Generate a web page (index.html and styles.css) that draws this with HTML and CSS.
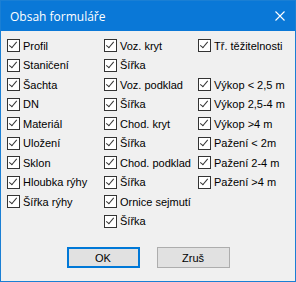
FILE: index.html
```html
<!DOCTYPE html>
<html lang="cs">
<head>
    <meta charset="UTF-8">
    <title>Obsah formuláře</title>
    <link rel="stylesheet" href="styles.css">
</head>
<body>
    <div class="dialog">
        <div class="titlebar">
            <span class="title">Obsah formuláře</span>
            <svg class="close" width="10" height="10" viewBox="0 0 10 10">
                <path d="M0.5 0.5 L9.5 9.5 M9.5 0.5 L0.5 9.5" stroke="#fff" stroke-width="1.1" fill="none"/>
            </svg>
        </div>
        <div class="content">
            <div class="columns">
                <div class="col col1">
                    <label class="check"><span class="box"></span>Profil</label>
                    <label class="check"><span class="box"></span>Staničení</label>
                    <label class="check"><span class="box"></span>Šachta</label>
                    <label class="check"><span class="box"></span>DN</label>
                    <label class="check"><span class="box"></span>Materiál</label>
                    <label class="check"><span class="box"></span>Uložení</label>
                    <label class="check"><span class="box"></span>Sklon</label>
                    <label class="check"><span class="box"></span>Hloubka rýhy</label>
                    <label class="check"><span class="box"></span>Šířka rýhy</label>
                </div>
                <div class="col col2">
                    <label class="check"><span class="box"></span>Voz. kryt</label>
                    <label class="check"><span class="box"></span>Šířka</label>
                    <label class="check"><span class="box"></span>Voz. podklad</label>
                    <label class="check"><span class="box"></span>Šířka</label>
                    <label class="check"><span class="box"></span>Chod. kryt</label>
                    <label class="check"><span class="box"></span>Šířka</label>
                    <label class="check"><span class="box"></span>Chod. podklad</label>
                    <label class="check"><span class="box"></span>Šířka</label>
                    <label class="check"><span class="box"></span>Ornice sejmutí</label>
                    <label class="check"><span class="box"></span>Šířka</label>
                </div>
                <div class="col col3">
                    <label class="check"><span class="box"></span>Tř. těžitelnosti</label>
                    <div class="spacer"></div>
                    <label class="check"><span class="box"></span>Výkop &lt; 2,5 m</label>
                    <label class="check"><span class="box"></span>Výkop 2,5-4 m</label>
                    <label class="check"><span class="box"></span>Výkop &gt;4 m</label>
                    <label class="check"><span class="box"></span>Pažení &lt; 2m</label>
                    <label class="check"><span class="box"></span>Pažení 2-4 m</label>
                    <label class="check"><span class="box"></span>Pažení &gt;4 m</label>
                </div>
            </div>
            <div class="buttons">
                <button class="btn default">OK</button>
                <button class="btn">Zruš</button>
            </div>
        </div>
    </div>
</body>
</html>
```

FILE: styles.css
```css
body {
    margin: 0;
    padding: 0;
    background-color: #f0f0f0;
}

.dialog {
    width: 296px;
    height: 282px;
    box-sizing: border-box;
    border: 1px solid #1a7fd4;
    background-color: #f0f0f0;
}

.titlebar {
    height: 30px;
    background-color: #0a78d7;
    display: flex;
    align-items: center;
    justify-content: space-between;
    padding: 0 10px 0 9px;
}

.title {
    color: #fff;
    font-family: "Open Sans", "Noto Sans", sans-serif;
    font-size: 12px;
}

.close {
    display: block;
}

.content {
    font-family: "Liberation Sans", Arial, sans-serif;
    font-size: 11px;
    color: #000;
    padding: 5px 0 0 6px;
}

.columns {
    display: grid;
    grid-template-columns: 97px 94px auto;
    align-items: start;
}

.col {
    display: grid;
    grid-auto-rows: 19.5px;
}

.check {
    display: flex;
    align-items: center;
    white-space: nowrap;
}

.box {
    width: 11px;
    height: 11px;
    border: 1px solid #333;
    background-color: #fff;
    margin-right: 3px;
    position: relative;
    flex: none;
}

.box::after {
    content: "";
    position: absolute;
    left: 3px;
    top: 0px;
    width: 3px;
    height: 7px;
    border-right: 1.3px solid #333;
    border-bottom: 1.3px solid #333;
    transform: rotate(40deg);
}

.buttons {
    display: flex;
    justify-content: center;
    gap: 17px;
    margin-top: 16px;
    padding-right: 6px;
}

.btn {
    width: 73px;
    height: 21px;
    font-family: "Liberation Sans", Arial, sans-serif;
    font-size: 11px;
    color: #000;
    background-color: #e1e1e1;
    border: 1px solid #adadad;
    padding: 0;
}

.btn.default {
    border: 2px solid #0078d7;
}
```
